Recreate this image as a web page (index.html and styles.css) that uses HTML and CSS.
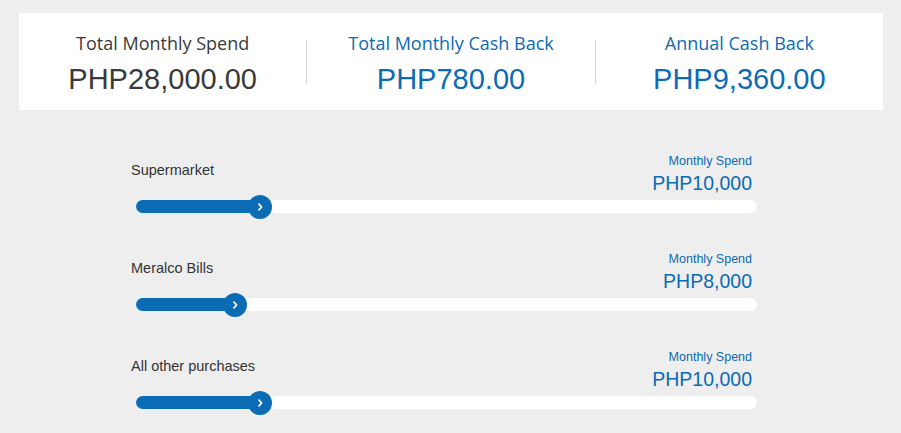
FILE: index.html
```html
<!DOCTYPE html>
<html lang="en">
<head>
    <meta charset="UTF-8">
    <meta name="viewport" content="width=device-width, initial-scale=1.0">
    <title>Cash Back Calculator</title>
    <link rel="stylesheet" href="styles.css">
</head>
<body>
    <div class="summary">
        <div class="summary-item">
            <div class="summary-title">Total Monthly Spend</div>
            <div class="summary-value">PHP28,000.00</div>
        </div>
        <div class="divider"></div>
        <div class="summary-item blue">
            <div class="summary-title">Total Monthly Cash Back</div>
            <div class="summary-value">PHP780.00</div>
        </div>
        <div class="divider"></div>
        <div class="summary-item blue">
            <div class="summary-title">Annual Cash Back</div>
            <div class="summary-value">PHP9,360.00</div>
        </div>
    </div>

    <div class="sliders">
        <div class="slider-row">
            <div class="slider-head">
                <div class="slider-label">Supermarket</div>
                <div class="slider-amount">
                    <div class="amount-caption">Monthly Spend</div>
                    <div class="amount-value">PHP10,000</div>
                </div>
            </div>
            <div class="track">
                <div class="fill" style="width: 20%"></div>
                <div class="thumb" style="left: 20%">
                    <svg width="10" height="10" viewBox="0 0 10 10"><path d="M4 2.2 L6.6 5 L4 7.8" fill="none" stroke="#fff" stroke-width="1.7" stroke-linecap="round" stroke-linejoin="round"/></svg>
                </div>
            </div>
        </div>

        <div class="slider-row">
            <div class="slider-head">
                <div class="slider-label">Meralco Bills</div>
                <div class="slider-amount">
                    <div class="amount-caption">Monthly Spend</div>
                    <div class="amount-value">PHP8,000</div>
                </div>
            </div>
            <div class="track">
                <div class="fill" style="width: 16%"></div>
                <div class="thumb" style="left: 16%">
                    <svg width="10" height="10" viewBox="0 0 10 10"><path d="M4 2.2 L6.6 5 L4 7.8" fill="none" stroke="#fff" stroke-width="1.7" stroke-linecap="round" stroke-linejoin="round"/></svg>
                </div>
            </div>
        </div>

        <div class="slider-row">
            <div class="slider-head">
                <div class="slider-label">All other purchases</div>
                <div class="slider-amount">
                    <div class="amount-caption">Monthly Spend</div>
                    <div class="amount-value">PHP10,000</div>
                </div>
            </div>
            <div class="track">
                <div class="fill" style="width: 20%"></div>
                <div class="thumb" style="left: 20%">
                    <svg width="10" height="10" viewBox="0 0 10 10"><path d="M4 2.2 L6.6 5 L4 7.8" fill="none" stroke="#fff" stroke-width="1.7" stroke-linecap="round" stroke-linejoin="round"/></svg>
                </div>
            </div>
        </div>
    </div>
</body>
</html>
```

FILE: styles.css
```css
body {
    margin: 0;
    background-color: #eeeeee;
    font-family: "Liberation Sans", Arial, sans-serif;
    color: #333333;
}
.summary {
    display: flex;
    height: 97px;
    margin: 13px 18px 0 19px;
    background: #ffffff;
}
.summary-item {
    flex: 1;
    padding-top: 19px;
    text-align: center;
    color: #3a3a3a;
}
.summary-item.blue {
    color: #0b6bb4;
}
.divider {
    align-self: center;
    width: 1px;
    height: 44px;
    background: #d6d6d6;
}
.summary-title {
    font-family: "Open Sans", sans-serif;
    font-size: 18px;
    line-height: 22px;
}
.summary-value {
    font-size: 29px;
    line-height: 34px;
    margin-top: 8px;
}
.sliders {
    margin: 44px 0 0 131px;
    width: 626px;
}
.slider-row {
    margin-bottom: 39px;
}
.slider-head {
    display: flex;
    justify-content: space-between;
    height: 42px;
    padding-right: 5px;
}
.slider-label {
    padding-top: 7px;
    font-size: 14.5px;
    line-height: 18px;
    color: #333333;
}
.slider-amount {
    text-align: right;
    color: #0b6bb4;
}
.amount-caption {
    font-size: 12.5px;
    line-height: 14px;
}
.amount-value {
    font-size: 19.5px;
    line-height: 26px;
    margin-top: 2px;
}
.track {
    position: relative;
    height: 13px;
    margin: 4px 0 0 5px;
    background: #ffffff;
    border-radius: 7px;
}
.fill {
    height: 100%;
    background: #0b6bb4;
    border-radius: 7px;
}
.thumb {
    position: absolute;
    top: 50%;
    width: 24px;
    height: 24px;
    border-radius: 50%;
    background: #0b6bb4;
    transform: translate(-50%, -50%);
    display: flex;
    align-items: center;
    justify-content: center;
}
```
